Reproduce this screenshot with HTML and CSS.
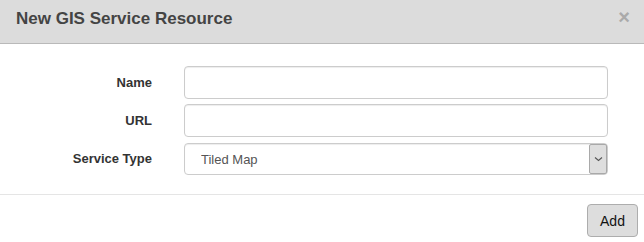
FILE: index.html
```html
<!DOCTYPE html>
<html lang="en">
<head>
    <meta charset="UTF-8">
    <meta name="viewport" content="width=device-width, initial-scale=1.0">
    <title>New GIS Service Resource</title>
    <link rel="stylesheet" href="styles.css">
</head>
<body>
    <div class="modal">
        <div class="modal-header">
            <h2>New GIS Service Resource</h2>
            <button class="close-btn" type="button">&times;</button>
        </div>

        <form class="modal-body">
            <label class="form-label" for="name">Name</label>
            <input class="form-input" type="text" id="name">

            <label class="form-label" for="url">URL</label>
            <input class="form-input" type="text" id="url">

            <label class="form-label" for="type">Service Type</label>
            <div class="select-wrap">
                <select class="form-input form-select" id="type">
                    <option>Tiled Map</option>
                    <option>Dynamic Map</option>
                    <option>Feature Layer</option>
                </select>
                <span class="select-arrow">
                    <svg width="9" height="6" viewBox="0 0 9 6"><path d="M1 1.5 L4.5 4.5 L8 1.5" fill="none" stroke="#555" stroke-width="1.1"/></svg>
                </span>
            </div>
        </form>

        <div class="modal-footer">
            <button class="add-btn" type="button">Add</button>
        </div>
    </div>
</body>
</html>
```

FILE: styles.css
```css
body {
    font-family: "Liberation Sans", Arial, sans-serif;
    margin: 0;
    background-color: white;
}
.modal {
    width: 644px;
    height: 242px;
    overflow: hidden;
}
.modal-header {
    display: flex;
    justify-content: space-between;
    align-items: center;
    box-sizing: border-box;
    height: 44px;
    padding: 0 14px 5px 16px;
    background-color: #dcdcdc;
    border-bottom: 1px solid #b9b9b9;
}
.modal-header h2 {
    margin: 0;
    font-size: 17px;
    font-weight: bold;
    color: #444;
}
.close-btn {
    padding: 0;
    border: none;
    background: none;
    font-family: "Liberation Sans", Arial, sans-serif;
    font-size: 20px;
    font-weight: bold;
    line-height: 1;
    color: #aaa;
    margin-top: -4px;
    cursor: pointer;
}
.modal-body {
    display: grid;
    grid-template-columns: 152px 424px;
    column-gap: 32px;
    row-gap: 5px;
    align-items: center;
    margin: 0;
    padding: 22px 0 19px 0;
    border-bottom: 1px solid #e5e5e5;
}
.form-label {
    text-align: right;
    font-size: 13px;
    font-weight: bold;
    color: #333;
}
.form-input {
    box-sizing: border-box;
    width: 100%;
    height: 33px;
    margin: 0;
    padding: 0 16px;
    border: 1px solid #ccc;
    border-radius: 4px;
    box-shadow: inset 0 1px 1px rgba(0,0,0,0.075);
    font-family: "Liberation Sans", Arial, sans-serif;
    font-size: 13px;
    color: #555;
    background-color: white;
}
.select-wrap {
    position: relative;
    margin-top: 1px;
}
.form-select {
    appearance: none;
    -webkit-appearance: none;
    height: 32px;
}
.select-arrow {
    position: absolute;
    top: 1px;
    right: 1px;
    bottom: 1px;
    width: 16px;
    display: flex;
    align-items: center;
    justify-content: center;
    background-color: #dedede;
    border: 1px solid #a9a9a9;
    border-radius: 2px;
    pointer-events: none;
}
.modal-footer {
    display: flex;
    justify-content: flex-end;
    padding: 9px 6px 0 0;
}
.add-btn {
    width: 51px;
    height: 33px;
    padding: 0;
    background-color: #dddddd;
    border: 1px solid #adadad;
    border-radius: 4px;
    font-family: "Liberation Sans", Arial, sans-serif;
    font-size: 14px;
    color: #111;
    cursor: pointer;
}
```
